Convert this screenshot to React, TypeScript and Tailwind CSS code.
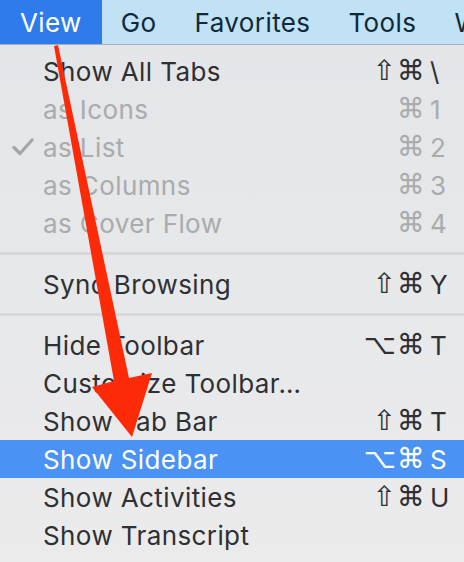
import { Fragment } from 'react'

type Item =
  | { sep: true }
  | { label: string; mods: string; keyName: string; disabled?: boolean; checked?: boolean; active?: boolean }

const items: Item[] = [
  { label: 'Show All Tabs', mods: '⇧⌘', keyName: '\\' },
  { label: 'as Icons', mods: '⌘', keyName: '1', disabled: true },
  { label: 'as List', mods: '⌘', keyName: '2', disabled: true, checked: true },
  { label: 'as Columns', mods: '⌘', keyName: '3', disabled: true },
  { label: 'as Cover Flow', mods: '⌘', keyName: '4', disabled: true },
  { sep: true },
  { label: 'Sync Browsing', mods: '⇧⌘', keyName: 'Y' },
  { sep: true },
  { label: 'Hide Toolbar', mods: '⌥⌘', keyName: 'T' },
  { label: 'Customize Toolbar…', mods: '', keyName: '' },
  { label: 'Show Tab Bar', mods: '⇧⌘', keyName: 'T' },
  { label: 'Show Sidebar', mods: '⌥⌘', keyName: 'S', active: true },
  { label: 'Show Activities', mods: '⇧⌘', keyName: 'U' },
  { label: 'Show Transcript', mods: '', keyName: '' },
]

const App = () => {
  return (
    <div
      className="relative w-[464px] h-[562px] overflow-hidden bg-gradient-to-b from-[#e3e5e8] to-[#ebebec]"
      style={{ fontFamily: 'Inter, "DejaVu Sans", sans-serif' }}
    >
      {/* menu bar */}
      <div className="flex h-[45px] items-stretch bg-[#c0e2f4] border-b border-[#a8b0b6] text-[26px] tracking-[0.4px] text-[#10293a] whitespace-nowrap">
        <div className="flex items-center px-5 bg-[#2e7cec] text-white">View</div>
        <div className="flex items-center px-[19px]">Go</div>
        <div className="flex items-center px-[19px]">Favorites</div>
        <div className="flex items-center px-[19px]">Tools</div>
        <div className="flex items-center px-[19px]">W</div>
      </div>

      {/* menu */}
      <div className="flex flex-col pt-[7px] text-[26px] tracking-[0.4px]">
        {items.map((it, i) => {
          if ('sep' in it) {
            return (
              <div key={i} className="py-[10px]">
                <div className="h-[3px] bg-[#d6d8da]"></div>
              </div>
            )
          }
          const color = it.active ? 'text-white' : it.disabled ? 'text-[#a9abad]' : 'text-[#2e3033]'
          return (
            <Fragment key={i}>
              <div
                className={`flex items-center h-[38px] ${it.active ? 'bg-[#4a92f3]' : ''} ${color}`}
              >
                <div className="w-[43px] flex justify-center pl-[2px]">
                  {it.checked && (
                    <svg width="22" height="18" viewBox="0 0 22 18" className="text-[#a3a5a7]">
                      <path d="M2 9.5 L8 15.5 L20 2" fill="none" stroke="currentColor" strokeWidth="3.2" strokeLinecap="round" strokeLinejoin="round" />
                    </svg>
                  )}
                </div>
                <div className="flex-1 whitespace-nowrap">{it.label}</div>
                <div className="flex items-center w-[132px]">
                  <div
                    className="w-[94px] text-right text-[28px] tracking-[1px] whitespace-nowrap"
                    style={{ fontFamily: '"DejaVu Sans", sans-serif' }}
                  >
                    {it.mods}
                  </div>
                  <div className="w-[38px] pl-[4px]">{it.keyName}</div>
                </div>
              </div>
            </Fragment>
          )
        })}
      </div>

      {/* red arrow annotation */}
      <svg className="absolute left-0 top-0 pointer-events-none" width="464" height="562" viewBox="0 0 464 562">
        <polygon
          points="54,46 58,45 129,378 152,373 132,437 92,387 114,381"
          fill="#fd2a07"
        />
      </svg>
    </div>
  )
}

export default App
